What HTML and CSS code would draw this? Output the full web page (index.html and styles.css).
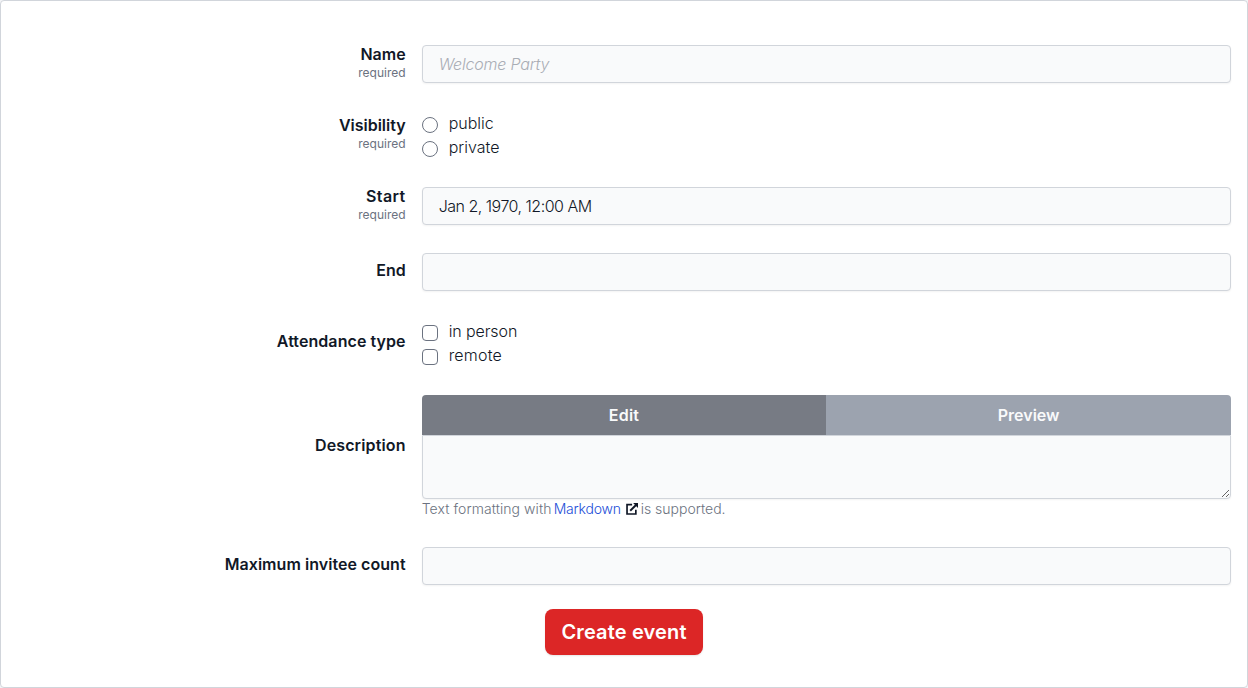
FILE: index.html
```html
<!DOCTYPE html>
<html lang="en">
<head>
<meta charset="utf-8">
<title>Create event</title>
<link rel="stylesheet" href="styles.css">
</head>
<body>
<form class="card">
  <div class="row">
    <label class="label required" for="name"><span>Name</span><small>required</small></label>
    <input class="input" id="name" placeholder="Welcome Party">
  </div>
  <div class="row">
    <div class="label required"><span>Visibility</span><small>required</small></div>
    <div class="options">
      <label class="option"><input type="radio" name="visibility"><span>public</span></label>
      <label class="option"><input type="radio" name="visibility"><span>private</span></label>
    </div>
  </div>
  <div class="row">
    <label class="label required" for="start"><span class="t-start">Start</span><small>required</small></label>
    <input class="input date" id="start" value="Jan 2, 1970, 12:00 AM">
  </div>
  <div class="row">
    <label class="label single" for="end"><span>End</span></label>
    <input class="input" id="end">
  </div>
  <div class="row">
    <div class="label single"><span class="t-attendance">Attendance type</span></div>
    <div class="options">
      <label class="option"><input type="checkbox"><span class="t-person">in person</span></label>
      <label class="option"><input type="checkbox"><span class="t-remote">remote</span></label>
    </div>
  </div>
  <div class="row">
    <label class="label description" for="description"><span class="t-description">Description</span></label>
    <div class="editor">
      <div class="tabs">
        <button type="button" class="tab active"><span class="t-edit">Edit</span></button>
        <button type="button" class="tab"><span>Preview</span></button>
      </div>
      <textarea class="input area" id="description"></textarea>
      <div class="hint"><span class="t-hint">Text formatting with</span><a class="t-markdown">Markdown</a><svg class="external" viewBox="0 0 512 512" fill="none" stroke="currentColor" stroke-width="72"><path d="M260 68H44v400h376V284"/><path d="M180 332 448 64" stroke-width="84"/><path d="M304 0h208v208z" fill="currentColor" stroke="none"/></svg><span class="t-supported">is supported.</span></div>
    </div>
  </div>
  <div class="row">
    <label class="label single" for="max"><span class="t-max">Maximum invitee count</span></label>
    <input class="input" id="max">
  </div>
  <button type="button" class="submit"><span>Create event</span></button>
</form>
</body>
</html>
```
FILE: styles.css
```css
* { box-sizing: border-box; }
body { margin: 0; background: #f3f4f6; color: #111827; font: 350 16px/24px Inter, "Open Sans", sans-serif; }
input, textarea, button { font: inherit; color: inherit; margin: 0; }
.card { display: flex; flex-direction: column; gap: 28px; height: 688px; padding: 44px 16px 0; background: #fff; border: 1px solid #d1d5db; border-radius: 4px; }
.row { display: grid; grid-template-columns: 1fr 2fr; align-items: center; }
.label { display: flex; flex-direction: column; align-items: flex-end; padding-right: 16px; font-weight: 600; line-height: 20px; white-space: nowrap; }
.label small { margin-top: 1px; font-size: 12px; font-weight: 400; line-height: 16px; color: #6b7280; letter-spacing: 0.02px; }
.required { height: 38px; }
.required span { line-height: 19px; }
.single { padding-bottom: 4px; }
.description { padding-bottom: 25px; }
.input { display: block; width: 100%; height: 38px; padding: 0 16px; background: #f9fafb; border: 1px solid #d1d5db; border-radius: 4px; box-shadow: 0 1px 2px rgba(0,0,0,.05); }
.input::placeholder { color: #a9adb5; font-style: italic; opacity: 1; letter-spacing: -0.2px; }
.date { letter-spacing: -0.5px; }
.options { height: 48px; }
.option { display: flex; height: 24px; }
.option input { appearance: none; width: 16px; height: 16px; margin: 6px 11px 0 0; border: 1px solid #6b7280; background: #fff; border-radius: 4px; }
.option input[type="radio"] { border-radius: 50%; }
.tabs { display: flex; height: 40px; border-radius: 4px 4px 0 0; overflow: hidden; }
.tab { flex: 1; border: 0; padding: 0; background: #9ca3af; color: #f9fafb; font-weight: 600; }
.active { background: #777b84; }
.area { height: 64px; border-radius: 0 0 4px 4px; resize: vertical; }
.hint { display: flex; height: 20px; font-size: 14px; line-height: 20px; color: #6b7280; white-space: nowrap; }
.hint a { color: #1d4ed8; }
.external { width: 12px; height: 12px; margin: 4px 3px 0 5px; color: #111827; }
.submit { align-self: center; width: 158px; height: 46px; margin-top: -4px; padding: 0; border: 0; border-radius: 8px; background: #dc2626; color: #fff; font-size: 20px; font-weight: 600; line-height: 28px; letter-spacing: 0.15px; box-shadow: 0 1px 2px rgba(0,0,0,.1); }

/* Optical tracking */
.t-start { letter-spacing: 0.4px; }
.t-attendance { letter-spacing: 0.07px; }
.t-description { letter-spacing: 0.14px; }
.t-edit { letter-spacing: 0.2px; }
.t-max { letter-spacing: 0.05px; }
.t-person { letter-spacing: -0.1px; }
.t-remote { letter-spacing: 0.2px; }
.t-hint { width: 132px; letter-spacing: 0.08px; }
.t-markdown { width: 67px; letter-spacing: -0.2px; }
.t-supported { letter-spacing: 0; }
```
